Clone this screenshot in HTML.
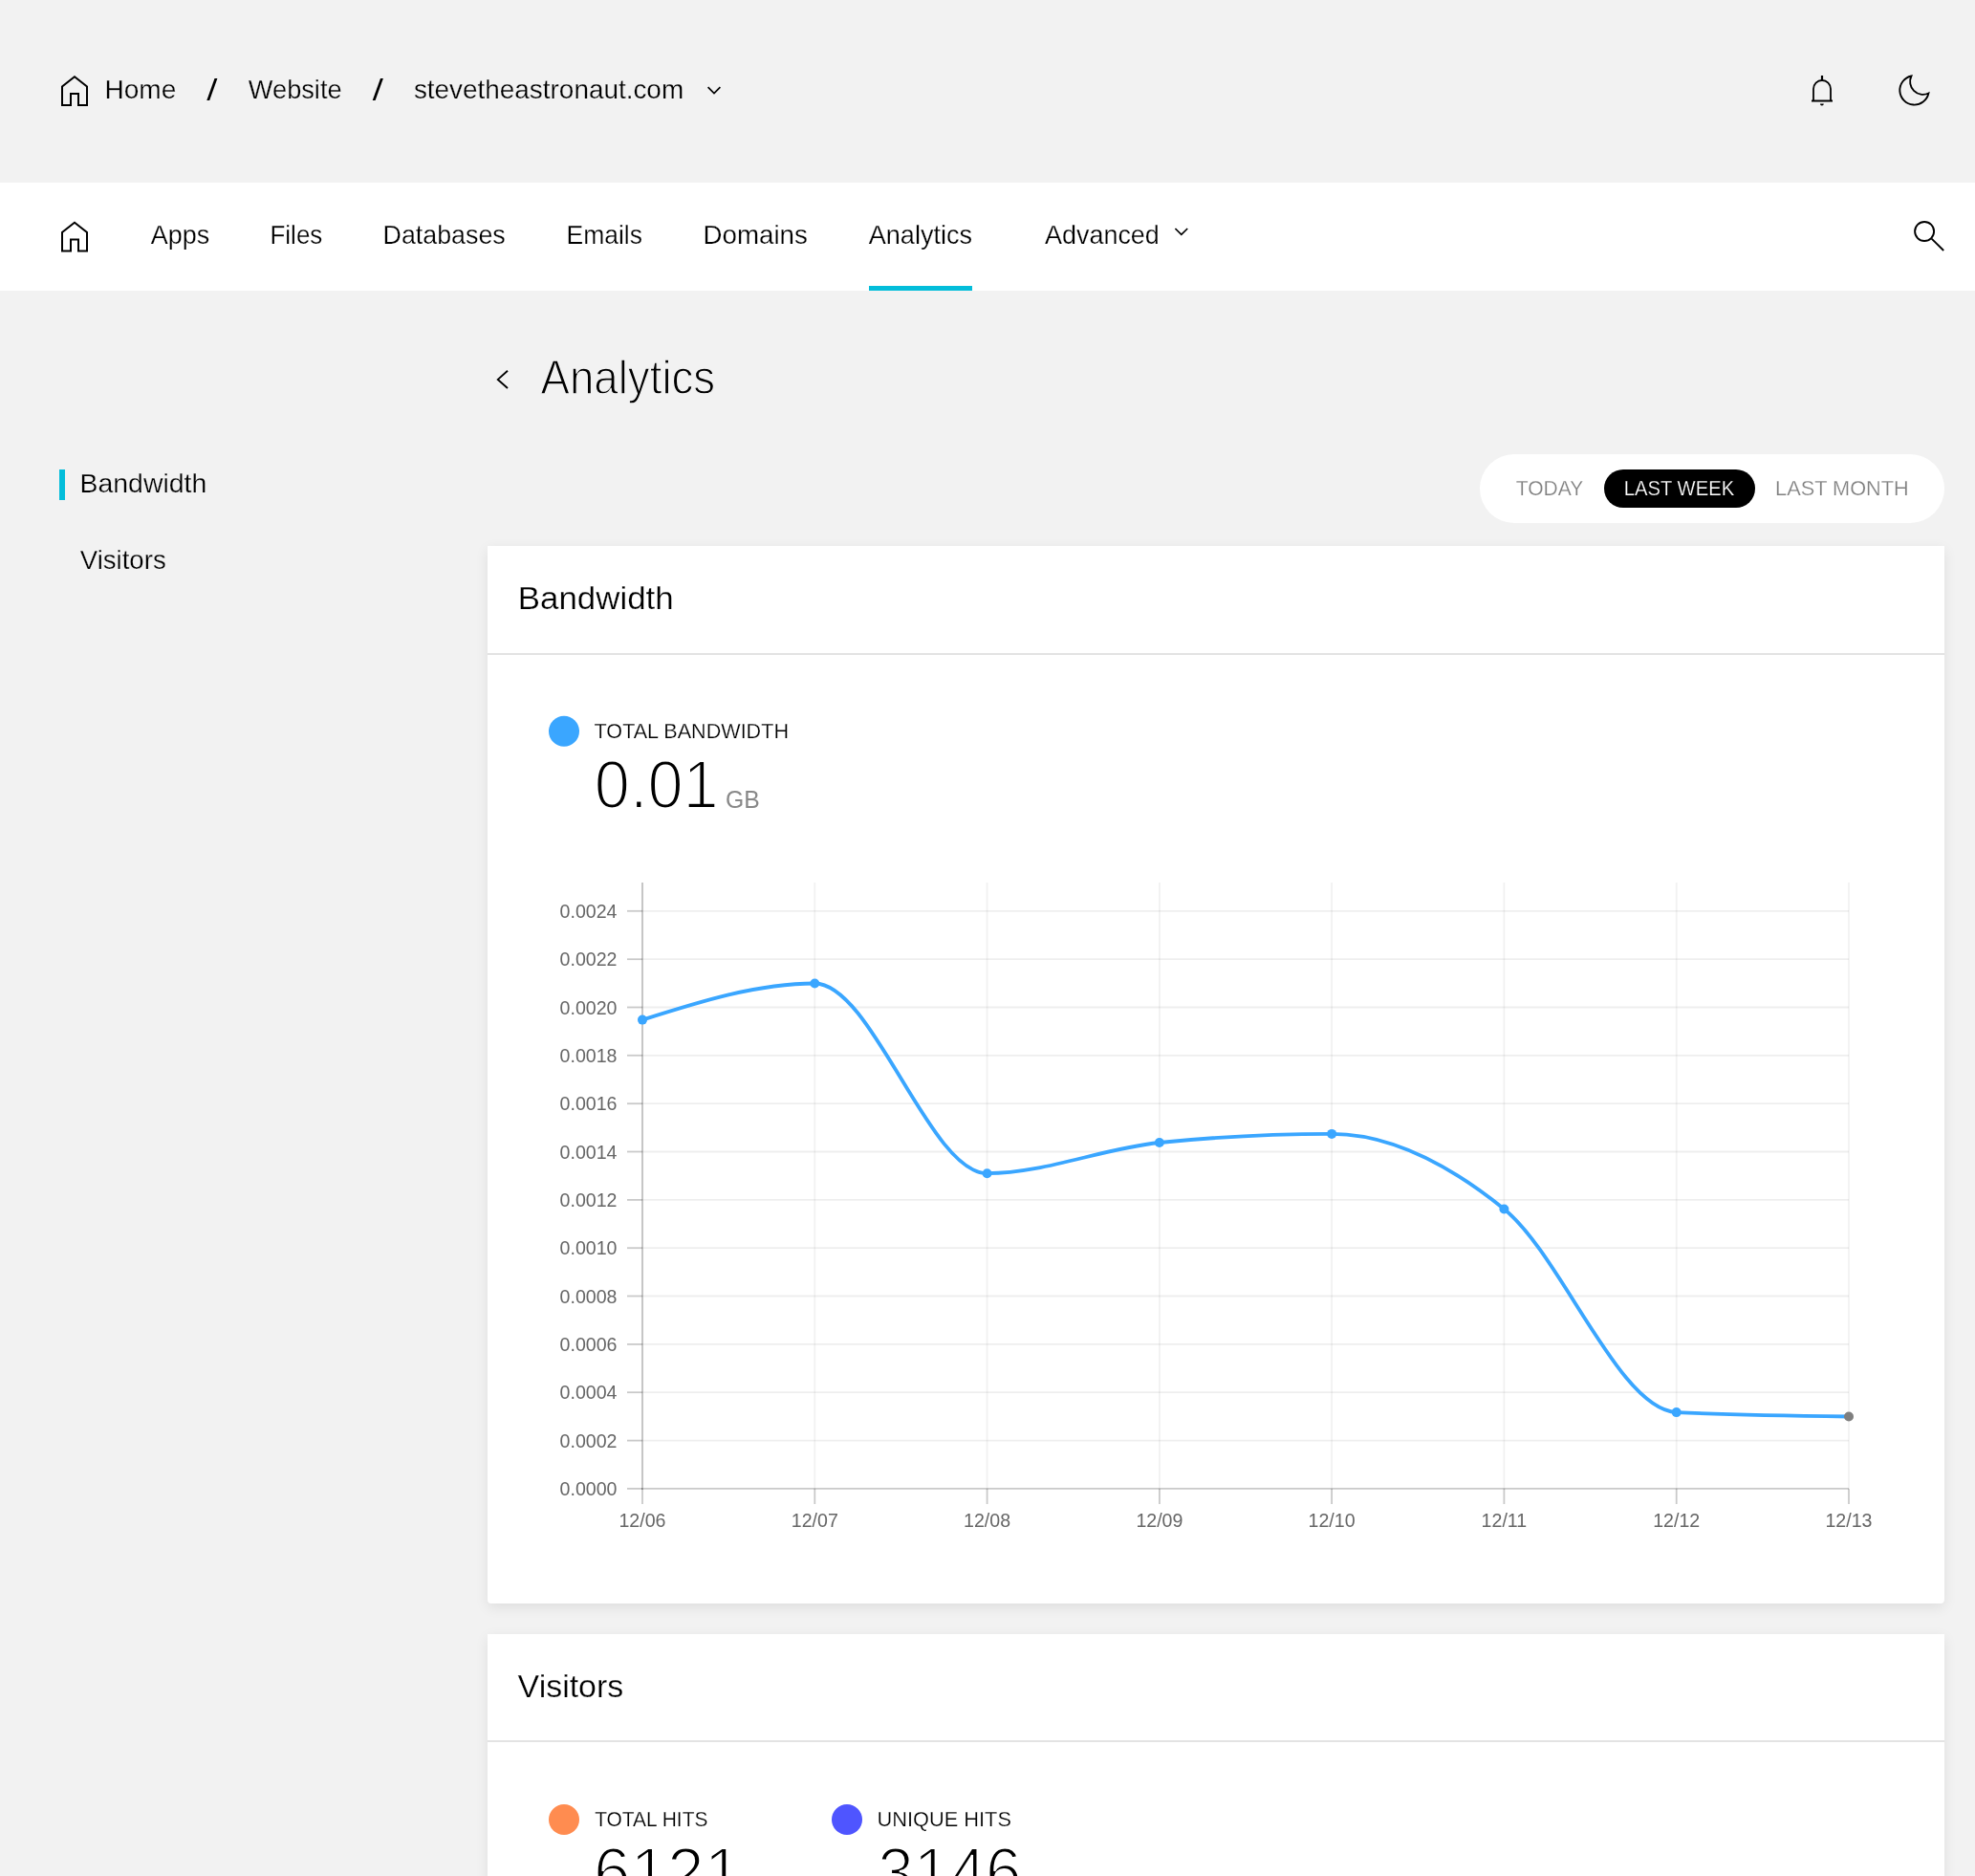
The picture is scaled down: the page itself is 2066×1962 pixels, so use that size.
<!DOCTYPE html>
<html><head><meta charset="utf-8">
<style>
html,body{margin:0;padding:0;}
body{width:2066px;height:1962px;overflow:hidden;background:#f2f2f2;position:relative;font-family:"Liberation Sans",sans-serif;}
.abs{position:absolute;}
#nav{left:0;top:191px;width:2066px;height:113px;background:#fff;}
#navbar{left:909px;top:299px;width:108px;height:4.5px;background:#03bdda;}
#sbar{left:62px;top:491px;width:6px;height:32px;background:#03bdda;}
#pillwrap{left:1548px;top:475px;width:486px;height:72px;border-radius:36px;background:#fff;}
#pill{left:1678px;top:491px;width:158px;height:40px;border-radius:20px;background:#000;}
.card{left:510px;width:1523.5px;background:#fff;border-radius:0 0 4px 4px;box-shadow:0 4px 14px rgba(0,0,0,0.085);}
#card1{top:571px;height:1106px;}
#card2{top:1708.5px;height:400px;}
.hr{left:510px;width:1523.5px;height:2px;background:#e3e3e3;}
svg{position:absolute;left:0;top:0;will-change:transform;}
text{font-family:"Liberation Sans",sans-serif;}
.tk{font-size:19.6px;fill:#666;}
</style></head>
<body>
<div id="nav" class="abs"></div>
<div id="navbar" class="abs"></div>
<div id="sbar" class="abs"></div>
<div id="pillwrap" class="abs"></div>
<div id="pill" class="abs"></div>
<div id="card1" class="abs card"></div>
<div id="card2" class="abs card"></div>
<div class="abs hr" style="top:682.5px"></div>
<div class="abs hr" style="top:1820px"></div>
<svg width="2066" height="1962" viewBox="0 0 2066 1962">
<!-- breadcrumb -->
<g fill="none" stroke="#000" stroke-width="2" stroke-linejoin="miter">
<path d="M74 110 V98 H82 V110 H91 V90.5 L78 80.3 L65 90.5 V110 Z"/>
<path d="M74 262.5 V250.5 H82 V262.5 H91 V243 L78 232.8 L65 243 V262.5 Z"/>
<path d="M740.6 91.2 L747 97.5 L753.4 91.2" stroke-width="1.7"/>
<path d="M1229.4 239 L1235.8 245.3 L1242.2 239" stroke-width="1.7"/>
<path d="M531 387.8 L520.8 396.9 L531 406" stroke-width="1.9"/>
<!-- bell -->
<path d="M1897 105.5 V93 A9 9 0 0 1 1915 93 V105.5" stroke-width="1.8"/>
<path d="M1895 105.5 H1917" stroke-width="2"/>
<path d="M1906 79 V84" stroke-width="2.2"/>
<!-- moon -->
<path d="M1999.4 79.5 A15.2 15.2 0 1 0 2017.4 97.5 A13.5 13.5 0 0 1 1999.4 79.5 Z" stroke-width="1.9"/>
<!-- search -->
<circle cx="2013.1" cy="242" r="10" stroke-width="1.9"/>
<path d="M2020.6 249.6 L2033.2 262" stroke-width="1.9"/>
</g>
<path d="M1904 108.5 h3.8 a1.9 1.9 0 0 1 -3.8 0 z" fill="#000"/>
<g fill="#000" font-size="30px">
<text id="t1" x="109.46" y="103.03" font-size="27.54px" textLength="74.86" lengthAdjust="spacingAndGlyphs" stroke="#f2f2f2" stroke-width="0.25">Home</text>
<polygon points="216.3,104.9 219.2,104.9 227.4,82 224.5,82" fill="#000"/>
<text id="t3" x="259.84" y="103.03" font-size="27.54px" textLength="97.79" lengthAdjust="spacingAndGlyphs" stroke="#f2f2f2" stroke-width="0.25">Website</text>
<polygon points="389.7,104.9 392.6,104.9 400.9,82 398,82" fill="#000"/>
<text id="t5" x="432.91" y="103.03" font-size="27.54px" textLength="282.22" lengthAdjust="spacingAndGlyphs" stroke="#f2f2f2" stroke-width="0.25">stevetheastronaut.com</text>
<text id="t6" x="157.71" y="255.12" font-size="27.54px" textLength="61.44" lengthAdjust="spacingAndGlyphs" stroke="#fff" stroke-width="0.25">Apps</text>
<text id="t7" x="282.53" y="255.12" font-size="27.54px" textLength="54.77" lengthAdjust="spacingAndGlyphs" stroke="#fff" stroke-width="0.25">Files</text>
<text id="t8" x="400.56" y="255.12" font-size="27.54px" textLength="128.23" lengthAdjust="spacingAndGlyphs" stroke="#fff" stroke-width="0.25">Databases</text>
<text id="t9" x="592.49" y="255.12" font-size="27.54px" textLength="79.48" lengthAdjust="spacingAndGlyphs" stroke="#fff" stroke-width="0.25">Emails</text>
<text id="t10" x="735.49" y="255.12" font-size="27.54px" textLength="109.43" lengthAdjust="spacingAndGlyphs" stroke="#fff" stroke-width="0.25">Domains</text>
<text id="t11" x="908.71" y="255.12" font-size="27.54px" textLength="108.44" lengthAdjust="spacingAndGlyphs" stroke="#fff" stroke-width="0.25">Analytics</text>
<text id="t12" x="1093.01" y="255.12" font-size="27.54px" textLength="119.81" lengthAdjust="spacingAndGlyphs" stroke="#fff" stroke-width="0.25">Advanced</text>
</g>
<text id="t13" x="565.44" y="412.45" font-size="49.56px" textLength="182.77" lengthAdjust="spacingAndGlyphs" fill="#000" stroke="#f2f2f2" stroke-width="1.3">Analytics</text>
<g fill="#000" font-size="29.5px">
<text id="t14" x="83.53" y="515.02" font-size="27.98px" textLength="132.74" lengthAdjust="spacingAndGlyphs" stroke="#f2f2f2" stroke-width="0.25">Bandwidth</text>
<text id="t15" x="83.74" y="595.02" font-size="27.98px" textLength="89.96" lengthAdjust="spacingAndGlyphs" stroke="#f2f2f2" stroke-width="0.25">Visitors</text>
</g>
<g font-size="23px">
<text id="t16" x="1585.80" y="518.02" font-size="22.75px" textLength="70.40" lengthAdjust="spacingAndGlyphs" fill="#808080" stroke="#fff" stroke-width="0.25">TODAY</text>
<text id="t17" x="1698.81" y="518.02" font-size="22.75px" textLength="115.38" lengthAdjust="spacingAndGlyphs" fill="#fff" stroke="#000" stroke-width="0.25">LAST WEEK</text>
<text id="t18" x="1857.08" y="518.02" font-size="22.75px" textLength="139.62" lengthAdjust="spacingAndGlyphs" fill="#808080" stroke="#fff" stroke-width="0.25">LAST MONTH</text>
</g>
<text id="t19" x="541.80" y="637.02" font-size="33.79px" textLength="162.90" lengthAdjust="spacingAndGlyphs" fill="#000" stroke="#fff" stroke-width="0.25">Bandwidth</text>
<circle cx="590" cy="764.7" r="16" fill="#3aa6ff"/>
<text id="t20" x="621.59" y="771.92" font-size="22.89px" textLength="203.39" lengthAdjust="spacingAndGlyphs" fill="#000" stroke="#fff" stroke-width="0.25">TOTAL BANDWIDTH</text>
<text id="t21" x="621.83" y="845.00" font-size="69.67px" textLength="129.87" lengthAdjust="spacingAndGlyphs" fill="#000" stroke="#fff" stroke-width="2.2">0.01</text>
<text id="t22" x="759.06" y="844.70" font-size="26.60px" textLength="35.73" lengthAdjust="spacingAndGlyphs" fill="#888">GB</text>
<!-- chart -->
<line x1="672.0" y1="923" x2="672.0" y2="1556.9" stroke="rgba(0,0,0,0.055)" stroke-width="1.8"/>
<line x1="852.3" y1="923" x2="852.3" y2="1556.9" stroke="rgba(0,0,0,0.055)" stroke-width="1.8"/>
<line x1="1032.6" y1="923" x2="1032.6" y2="1556.9" stroke="rgba(0,0,0,0.055)" stroke-width="1.8"/>
<line x1="1212.9" y1="923" x2="1212.9" y2="1556.9" stroke="rgba(0,0,0,0.055)" stroke-width="1.8"/>
<line x1="1393.1" y1="923" x2="1393.1" y2="1556.9" stroke="rgba(0,0,0,0.055)" stroke-width="1.8"/>
<line x1="1573.4" y1="923" x2="1573.4" y2="1556.9" stroke="rgba(0,0,0,0.055)" stroke-width="1.8"/>
<line x1="1753.7" y1="923" x2="1753.7" y2="1556.9" stroke="rgba(0,0,0,0.055)" stroke-width="1.8"/>
<line x1="1934.0" y1="923" x2="1934.0" y2="1556.9" stroke="rgba(0,0,0,0.055)" stroke-width="1.8"/>
<line x1="672.0" y1="1506.6" x2="1934.0" y2="1506.6" stroke="rgba(0,0,0,0.065)" stroke-width="1.8"/>
<line x1="672.0" y1="1456.2" x2="1934.0" y2="1456.2" stroke="rgba(0,0,0,0.065)" stroke-width="1.8"/>
<line x1="672.0" y1="1405.9" x2="1934.0" y2="1405.9" stroke="rgba(0,0,0,0.065)" stroke-width="1.8"/>
<line x1="672.0" y1="1355.5" x2="1934.0" y2="1355.5" stroke="rgba(0,0,0,0.065)" stroke-width="1.8"/>
<line x1="672.0" y1="1305.2" x2="1934.0" y2="1305.2" stroke="rgba(0,0,0,0.065)" stroke-width="1.8"/>
<line x1="672.0" y1="1254.9" x2="1934.0" y2="1254.9" stroke="rgba(0,0,0,0.065)" stroke-width="1.8"/>
<line x1="672.0" y1="1204.5" x2="1934.0" y2="1204.5" stroke="rgba(0,0,0,0.065)" stroke-width="1.8"/>
<line x1="672.0" y1="1154.2" x2="1934.0" y2="1154.2" stroke="rgba(0,0,0,0.065)" stroke-width="1.8"/>
<line x1="672.0" y1="1103.8" x2="1934.0" y2="1103.8" stroke="rgba(0,0,0,0.065)" stroke-width="1.8"/>
<line x1="672.0" y1="1053.5" x2="1934.0" y2="1053.5" stroke="rgba(0,0,0,0.065)" stroke-width="1.8"/>
<line x1="672.0" y1="1003.2" x2="1934.0" y2="1003.2" stroke="rgba(0,0,0,0.065)" stroke-width="1.8"/>
<line x1="672.0" y1="952.8" x2="1934.0" y2="952.8" stroke="rgba(0,0,0,0.065)" stroke-width="1.8"/>
<line x1="656" y1="1556.9" x2="672.0" y2="1556.9" stroke="rgba(0,0,0,0.21)" stroke-width="1.8"/>
<text x="645.5" y="1564.1" text-anchor="end" class="tk">0.0000</text>
<line x1="656" y1="1506.6" x2="672.0" y2="1506.6" stroke="rgba(0,0,0,0.21)" stroke-width="1.8"/>
<text x="645.5" y="1513.8" text-anchor="end" class="tk">0.0002</text>
<line x1="656" y1="1456.2" x2="672.0" y2="1456.2" stroke="rgba(0,0,0,0.21)" stroke-width="1.8"/>
<text x="645.5" y="1463.4" text-anchor="end" class="tk">0.0004</text>
<line x1="656" y1="1405.9" x2="672.0" y2="1405.9" stroke="rgba(0,0,0,0.21)" stroke-width="1.8"/>
<text x="645.5" y="1413.1" text-anchor="end" class="tk">0.0006</text>
<line x1="656" y1="1355.5" x2="672.0" y2="1355.5" stroke="rgba(0,0,0,0.21)" stroke-width="1.8"/>
<text x="645.5" y="1362.7" text-anchor="end" class="tk">0.0008</text>
<line x1="656" y1="1305.2" x2="672.0" y2="1305.2" stroke="rgba(0,0,0,0.21)" stroke-width="1.8"/>
<text x="645.5" y="1312.4" text-anchor="end" class="tk">0.0010</text>
<line x1="656" y1="1254.9" x2="672.0" y2="1254.9" stroke="rgba(0,0,0,0.21)" stroke-width="1.8"/>
<text x="645.5" y="1262.1" text-anchor="end" class="tk">0.0012</text>
<line x1="656" y1="1204.5" x2="672.0" y2="1204.5" stroke="rgba(0,0,0,0.21)" stroke-width="1.8"/>
<text x="645.5" y="1211.7" text-anchor="end" class="tk">0.0014</text>
<line x1="656" y1="1154.2" x2="672.0" y2="1154.2" stroke="rgba(0,0,0,0.21)" stroke-width="1.8"/>
<text x="645.5" y="1161.4" text-anchor="end" class="tk">0.0016</text>
<line x1="656" y1="1103.8" x2="672.0" y2="1103.8" stroke="rgba(0,0,0,0.21)" stroke-width="1.8"/>
<text x="645.5" y="1111.0" text-anchor="end" class="tk">0.0018</text>
<line x1="656" y1="1053.5" x2="672.0" y2="1053.5" stroke="rgba(0,0,0,0.21)" stroke-width="1.8"/>
<text x="645.5" y="1060.7" text-anchor="end" class="tk">0.0020</text>
<line x1="656" y1="1003.2" x2="672.0" y2="1003.2" stroke="rgba(0,0,0,0.21)" stroke-width="1.8"/>
<text x="645.5" y="1010.4" text-anchor="end" class="tk">0.0022</text>
<line x1="656" y1="952.8" x2="672.0" y2="952.8" stroke="rgba(0,0,0,0.21)" stroke-width="1.8"/>
<text x="645.5" y="960.0" text-anchor="end" class="tk">0.0024</text>
<line x1="672.0" y1="1556.9" x2="672.0" y2="1573" stroke="rgba(0,0,0,0.21)" stroke-width="1.8"/>
<text x="672.0" y="1597" text-anchor="middle" class="tk">12/06</text>
<line x1="852.3" y1="1556.9" x2="852.3" y2="1573" stroke="rgba(0,0,0,0.21)" stroke-width="1.8"/>
<text x="852.3" y="1597" text-anchor="middle" class="tk">12/07</text>
<line x1="1032.6" y1="1556.9" x2="1032.6" y2="1573" stroke="rgba(0,0,0,0.21)" stroke-width="1.8"/>
<text x="1032.6" y="1597" text-anchor="middle" class="tk">12/08</text>
<line x1="1212.9" y1="1556.9" x2="1212.9" y2="1573" stroke="rgba(0,0,0,0.21)" stroke-width="1.8"/>
<text x="1212.9" y="1597" text-anchor="middle" class="tk">12/09</text>
<line x1="1393.1" y1="1556.9" x2="1393.1" y2="1573" stroke="rgba(0,0,0,0.21)" stroke-width="1.8"/>
<text x="1393.1" y="1597" text-anchor="middle" class="tk">12/10</text>
<line x1="1573.4" y1="1556.9" x2="1573.4" y2="1573" stroke="rgba(0,0,0,0.21)" stroke-width="1.8"/>
<text x="1573.4" y="1597" text-anchor="middle" class="tk">12/11</text>
<line x1="1753.7" y1="1556.9" x2="1753.7" y2="1573" stroke="rgba(0,0,0,0.21)" stroke-width="1.8"/>
<text x="1753.7" y="1597" text-anchor="middle" class="tk">12/12</text>
<line x1="1934.0" y1="1556.9" x2="1934.0" y2="1573" stroke="rgba(0,0,0,0.21)" stroke-width="1.8"/>
<text x="1934.0" y="1597" text-anchor="middle" class="tk">12/13</text>
<line x1="672.0" y1="923" x2="672.0" y2="1557.8000000000002" stroke="rgba(0,0,0,0.21)" stroke-width="1.8"/>
<line x1="671.1" y1="1556.9" x2="1934.0" y2="1556.9" stroke="rgba(0,0,0,0.21)" stroke-width="1.8"/>
<path d="M672.00 1066.60 C732.10 1047.55 792.19 1028.50 852.29 1028.50 C912.38 1028.50 972.48 1227.20 1032.57 1227.20 C1092.67 1227.20 1152.76 1201.07 1212.86 1195.00 C1272.95 1188.93 1333.05 1185.90 1393.14 1185.90 C1453.24 1185.90 1513.33 1215.97 1573.43 1264.50 C1633.52 1313.03 1693.62 1474.17 1753.71 1477.10 C1813.81 1480.03 1873.90 1480.77 1934.00 1481.50" fill="none" stroke="#3aa6ff" stroke-width="3.8"/>
<circle cx="672.00" cy="1066.60" r="5" fill="#3aa6ff"/>
<circle cx="852.29" cy="1028.50" r="5" fill="#3aa6ff"/>
<circle cx="1032.57" cy="1227.20" r="5" fill="#3aa6ff"/>
<circle cx="1212.86" cy="1195.00" r="5" fill="#3aa6ff"/>
<circle cx="1393.14" cy="1185.90" r="5" fill="#3aa6ff"/>
<circle cx="1573.43" cy="1264.50" r="5" fill="#3aa6ff"/>
<circle cx="1753.71" cy="1477.10" r="5" fill="#3aa6ff"/>
<circle cx="1934.00" cy="1481.50" r="5" fill="#7f7f7f"/>
<!-- visitors -->
<text id="t23" x="541.61" y="1775.03" font-size="33.79px" textLength="110.62" lengthAdjust="spacingAndGlyphs" fill="#000" stroke="#fff" stroke-width="0.25">Visitors</text>
<circle cx="590" cy="1903" r="16" fill="#ff8c50"/>
<text id="t24" x="622.20" y="1909.92" font-size="22.75px" textLength="118.20" lengthAdjust="spacingAndGlyphs" fill="#000" stroke="#fff" stroke-width="0.25">TOTAL HITS</text>
<circle cx="886" cy="1903" r="16" fill="#4f55ff"/>
<text id="t25" x="917.49" y="1909.92" font-size="22.75px" textLength="140.47" lengthAdjust="spacingAndGlyphs" fill="#000" stroke="#fff" stroke-width="0.25">UNIQUE HITS</text>
<text id="t26" x="620.93" y="1982.30" font-size="69.67px" textLength="154.31" lengthAdjust="spacingAndGlyphs" fill="#000" stroke="#fff" stroke-width="2.2">6121</text>
<text id="t27" x="918.16" y="1982.30" font-size="69.67px" textLength="150.46" lengthAdjust="spacingAndGlyphs" fill="#000" stroke="#fff" stroke-width="2.2">3146</text>
</svg>
</body></html>
